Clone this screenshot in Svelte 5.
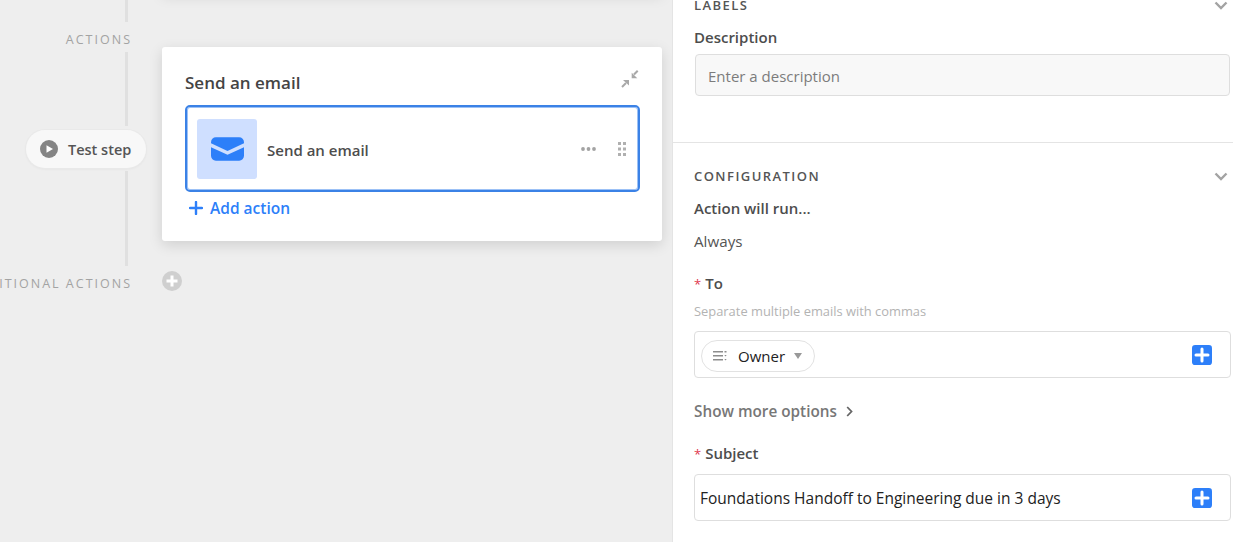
<script>
  const addIcon = "M8 4v8M4 8h8";
</script>

<div class="page">
  <section class="canvas">
    <div class="timeline">
      <div class="line first"></div>
      <div class="group-label actions">ACTIONS</div>
      <div class="line second"></div>
      <button class="test-step">
        <svg width="18" height="18" viewBox="0 0 18 18">
          <circle cx="9" cy="9" r="9" fill="#848484" />
          <path d="M6.5 5.2v7.6L13 9z" fill="#fff" />
        </svg>
        Test step
      </button>
      <div class="line third"></div>
      <div class="group-label conditional">CONDITIONAL ACTIONS</div>
    </div>

    <div class="cards">
      <div class="prev-card"></div>
      <div class="card">
        <div class="card-head">
          <h2>Send an email</h2>
          <svg width="18" height="18" viewBox="0 0 18 18" fill="#a8a8a8">
            <path d="M10.700 2.700v5.600h5.600z" />
            <path d="M16.700.7 13 4.500" stroke="#a8a8a8" stroke-width="2" />
            <path d="M2 10h6v5.500z" />
            <path d="M1 17l4-4" stroke="#a8a8a8" stroke-width="2" />
          </svg>
        </div>
        <div class="action">
          <div class="action-icon">
            <svg width="33" height="24" viewBox="0 0 34 24">
              <path d="M0 5a5 5 0 0 1 5-5h24a5 5 0 0 1 5 5v1.200L17 14 0 6.200z" fill="#2d7ff9" />
              <path d="M0 10.200 17 18l17-7.800V19a5 5 0 0 1-5 5H5a5 5 0 0 1-5-5z" fill="#2d7ff9" />
            </svg>
          </div>
          <span class="action-name">Send an email</span>
          <svg class="dots" width="15" height="4" viewBox="0 0 15 4" fill="#a3a3a3">
            <circle cx="2" cy="2" r="1.900" /><circle cx="7.500" cy="2" r="1.900" /><circle cx="13" cy="2" r="1.900" />
          </svg>
          <svg class="grip" width="8" height="14" viewBox="0 0 8 14" fill="#b0b0b0">
            <rect x="0" y="0" width="3" height="3" /><rect x="5" y="0" width="3" height="3" />
            <rect x="0" y="5.500" width="3" height="3" /><rect x="5" y="5.500" width="3" height="3" />
            <rect x="0" y="11" width="3" height="3" /><rect x="5" y="11" width="3" height="3" />
          </svg>
        </div>
        <div class="add-action">
          <svg width="14" height="14" viewBox="0 0 14 14">
            <path d="M7 1v12M1 7h12" stroke="#2d7ff9" stroke-width="2.400" stroke-linecap="round" />
          </svg>
          Add action
        </div>
      </div>
      <div class="add-conditional">
        <svg width="20" height="20" viewBox="0 0 20 20">
          <circle cx="10" cy="10" r="10" fill="#cfcfcf" />
          <path d="M10 4.500v11M4.500 10h11" stroke="#fff" stroke-width="3" />
        </svg>
      </div>
    </div>
  </section>

  <aside class="panel">
    <div class="section labels">
      <div class="section-head">
        <span>LABELS</span>
        <svg class="chev" width="14" height="9" viewBox="0 0 14 9"><path d="M1.500 1.500 7 7l5.500-5.500" /></svg>
      </div>
      <div class="field-title desc-title">Description</div>
      <div class="desc-input">Enter a description</div>
    </div>

    <div class="section config">
      <div class="section-head">
        <span>CONFIGURATION</span>
        <svg class="chev" width="14" height="9" viewBox="0 0 14 9"><path d="M1.500 1.500 7 7l5.500-5.500" /></svg>
      </div>
      <div class="field-title run-title">Action will run...</div>
      <div class="always">Always</div>

      <div class="field-title to-title"><span class="req">*</span>To</div>
      <div class="hint">Separate multiple emails with commas</div>
      <div class="box">
        <div class="chip">
          <svg width="14" height="12" viewBox="0 0 14 12" fill="#8d8d8d">
            <rect x="0" y="1" width="10" height="1.500" /><rect x="0" y="5" width="10" height="1.500" /><rect x="0" y="9" width="10" height="1.500" />
            <rect x="11.500" y="1" width="2" height="1.500" /><path d="M11.300 5h2.400l-1.200 1.600zM11.300 9h2.400l-1.200 1.600z" />
          </svg>
          <span>Owner</span>
          <svg width="8" height="6" viewBox="0 0 8 6" fill="#999"><path d="M0 0h8L4 6z" /></svg>
        </div>
        <svg class="plus" width="20" height="20" viewBox="0 0 16 16">
          <rect width="16" height="16" rx="2.500" fill="#2d7ff9" />
          <path d={addIcon} stroke="#fff" stroke-width="2" stroke-linecap="round" transform="translate(-1.600 -1.600) scale(1.200)" />
        </svg>
      </div>

      <div class="more">
        Show more options
        <svg width="7" height="11" viewBox="0 0 7 11"><path d="M1.200 1 5.500 5.500 1.200 10" fill="none" stroke="#666" stroke-width="1.800" /></svg>
      </div>

      <div class="field-title subject-title"><span class="req">*</span>Subject</div>
      <div class="box subject">
        <span>Foundations Handoff to Engineering due in 3 days</span>
        <svg class="plus" width="20" height="20" viewBox="0 0 16 16">
          <rect width="16" height="16" rx="2.500" fill="#2d7ff9" />
          <path d={addIcon} stroke="#fff" stroke-width="2" stroke-linecap="round" transform="translate(-1.600 -1.600) scale(1.200)" />
        </svg>
      </div>
    </div>
  </aside>
</div>

<style>
  :global(body) {
    margin: 0;
    background: #eee;
  }

  .page {
    display: flex;
    height: 542px;
    overflow: hidden;
    font-family: "Open Sans", "Noto Sans", sans-serif;
    color: #444;
  }

  .canvas {
    width: 672px;
    flex: none;
    display: flex;
    background: #eee;
  }

  .timeline {
    width: 146px;
    flex: none;
    display: flex;
    flex-direction: column;
    align-items: flex-end;
  }

  .line {
    width: 3px;
    margin-right: 18px;
    background: #e0e0e0;
  }

  .line.first { height: 22px; }
  .line.second { height: 74px; margin-top: 5px; }
  .line.third { height: 95px; margin-top: 3px; }

  .group-label {
    height: 14px;
    line-height: 14px;
    margin-right: 14px;
    margin-left: -40px;
    font-size: 12.500px;
    letter-spacing: 2px;
    color: #a3a3a3;
    white-space: nowrap;
  }

  .group-label.actions { margin-top: 11px; }
  .group-label.conditional { margin-top: 11px; }

  .test-step {
    display: flex;
    align-items: center;
    gap: 10px;
    box-sizing: border-box;
    width: 120px;
    height: 38px;
    margin-top: 4px;
    padding: 0 0 0 14px;
    border: 0;
    border-radius: 19px;
    background: #f8f8f8;
    box-shadow: 0 0 0 1px #e9e9e9, 0 1px 3px rgba(0, 0, 0, 0.06);
    font: 600 14.500px "Open Sans", sans-serif;
    color: #555;
    white-space: nowrap;
  }

  .cards {
    margin-left: 16px;
    width: 500px;
  }

  .prev-card {
    height: 10px;
    margin: -18px 0 55px;
    background: #fff;
    box-shadow: 0 4px 14px rgba(0, 0, 0, 0.13);
  }

  .card {
    box-sizing: border-box;
    height: 194px;
    padding: 0 22px 0 23px;
    border-radius: 3px;
    background: #fff;
    box-shadow: 0 4px 14px rgba(0, 0, 0, 0.13);
  }

  .card-head {
    display: flex;
    align-items: center;
    justify-content: space-between;
    height: 58px;
    padding-right: 1px;
  }

  .card-head svg { margin-top: 6px; }

  h2 {
    margin: 0;
    padding-top: 12px;
    font-size: 17px;
    font-weight: 600;
    color: #444;
  }

  .action {
    display: flex;
    align-items: center;
    box-sizing: border-box;
    height: 87px;
    padding: 0 12px 0 10px;
    border: 2px solid #3b82e6;
    border-radius: 5px;
    box-shadow: inset 0 0 0 1px #9cc1f6;
  }

  .action-icon {
    display: flex;
    align-items: center;
    justify-content: center;
    width: 60px;
    height: 60px;
    flex: none;
    border-radius: 3px;
    background: #cfdfff;
  }

  .action-name {
    margin: 3px 0 0 10px;
    flex: 1;
    font-size: 15px;
    font-weight: 600;
    color: #4d4d4d;
  }

  .grip { margin-left: 22px; }

  .add-action {
    display: flex;
    align-items: center;
    gap: 7px;
    margin: 5px 0 0 4px;
    font-size: 15.500px;
    font-weight: 600;
    color: #2d7ff9;
  }

  .add-conditional {
    margin-top: 30px;
    height: 20px;
  }

  .panel {
    flex: 1;
    min-width: 0;
    background: #fff;
    border-left: 1px solid #e4e4e4;
    margin-top: -10px;
  }

  .section {
    padding-left: 21px;
  }

  .labels {
    height: 152px;
    border-bottom: 1px solid #e4e4e4;
  }

  .section-head {
    display: flex;
    align-items: center;
    justify-content: space-between;
    height: 20px;
    padding-right: 5px;
    font-size: 13px;
    font-weight: 600;
    letter-spacing: 1.450px;
    color: #555;
  }

  .chev {
    fill: none;
    stroke: #a3a3a3;
    stroke-width: 2.400;
  }

  .labels .section-head { padding-top: 5px; }

  .field-title {
    font-size: 15px;
    font-weight: 600;
    line-height: 20px;
    color: #4d4d4d;
  }

  .desc-title { margin-top: 12px; }

  .desc-input {
    box-sizing: border-box;
    height: 42px;
    margin: 7px 3px 0 1px;
    padding: 0 12px;
    line-height: 42px;
    font-size: 15px;
    color: #7c7c7c;
    background: #f8f8f8;
    border: 1px solid #dedede;
    border-radius: 4px;
  }

  .config { padding-top: 23px; }

  .run-title { margin-top: 12px; }

  .always {
    margin-top: 13px;
    font-size: 15.200px;
    line-height: 20px;
    color: #555;
  }

  .to-title { margin-top: 22px; }

  .req {
    margin-right: 4px;
    color: #e0384f;
    font-weight: 400;
    font-size: 13px;
  }

  .hint {
    margin-top: 8px;
    font-size: 12.900px;
    line-height: 18px;
    color: #b3b3b3;
  }

  .box {
    display: flex;
    align-items: center;
    justify-content: space-between;
    box-sizing: border-box;
    height: 47px;
    margin: 11px 2px 0 0;
    padding: 0 18px 0 6px;
    border: 1px solid #dedede;
    border-radius: 4px;
    font-size: 15.500px;
    color: #222;
  }

  .chip {
    display: flex;
    align-items: center;
    box-sizing: border-box;
    width: 114px;
    height: 32px;
    margin-top: 3px;
    padding-left: 11px;
    border: 1px solid #e2e2e2;
    border-radius: 16px;
    font-size: 15px;
  }

  .chip span { margin: 0 9px 0 11px; }

  .plus { margin-top: 1px; }

  .more {
    display: flex;
    align-items: center;
    gap: 9px;
    margin-top: 23px;
    line-height: 20px;
    font-size: 15.300px;
    font-weight: 600;
    color: #777;
  }

  .subject-title { margin-top: 22px; }

  .box.subject {
    margin-top: 10px;
    padding-left: 5px;
  }
</style>
